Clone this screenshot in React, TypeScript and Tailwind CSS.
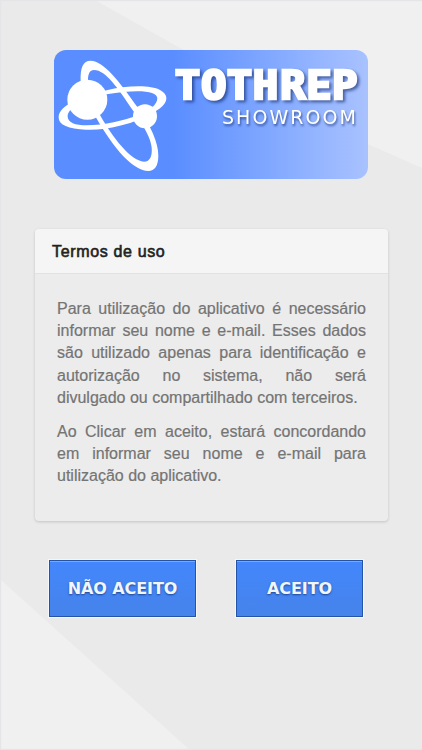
import React from 'react';

interface ActionButtonProps {
  label: string;
  className?: string;
}

// "divulgado" stays glued to the next word so that the line breaks before it
const terms: string[] = [
  'Para utilização do aplicativo é necessário informar seu nome e e-mail. Esses dados são utilizado apenas para identificação e autorização no sistema, não será divulgado\u00a0ou compartilhado com terceiros.',
  'Ao Clicar em aceito, estará concordando em informar seu nome e e-mail para utilização do aplicativo.',
];

const Background: React.FC = () => (
  <svg className="absolute inset-0" width="422" height="750" viewBox="0 0 422 750">
    <path d="M95 0L180 48L370 145L422 168V0Z" fill="#f0f0f0" />
    <path d="M0 579L190 750H0Z" fill="#f0f0f0" />
    <path d="M0 .5H422M.5 0V750M0 749.5H422" stroke="#e5e5e8" strokeWidth="1.5" />
  </svg>
);

const Logo: React.FC = () => (
  <div className="h-[129px] w-[314px] overflow-hidden rounded-[12px] bg-linear-to-r from-[#5a8dff] from-38% to-[#a9c2ff]">
    <svg width="314" height="129" viewBox="0 0 314 129" fill="#fff">
      <g transform="scale(.33333) translate(-12 -15)" fillRule="evenodd">
        <path d="M26 218C26 190 65 160 170 136C225 122 300 118 330 135C364 154 350 181 310 203C250 238 165 257 108 254C55 252 26 239 26 218ZM53 215C54 232 75 241 110 241C165 240 220 226 260 212C300 198 322 178 322 160C321 138 265 132 170 148C90 165 52 192 53 215Z" />
        <path d="M92 112C90 68 99 47 122 47C162 49 205 105 265 190C303 244 325 293 325 332C325 362 314 378 295 378C251 377 193 315 135 212C108 167 93 140 92 112ZM114 105C115 138 127 170 150 210C187 276 242 348 282 350C301 350 307 331 305 308C302 282 288 253 250 198C205 132 168 75 132 75C119 75 114 87 114 105Z" />
        <circle cx="112" cy="164" r="60" />
        <circle cx="285" cy="214" r="36" />
      </g>
      <text
        className="[filter:drop-shadow(2px_2px_1.5px_rgba(20,45,110,0.65))]"
        transform="scale(1.1 1)"
        x="121.3 145.3 168.6 192.4 217.2 241 264.4"
        y="48.7"
        textAnchor="middle"
        fontFamily="DejaVu Sans Mono, monospace"
        fontWeight="700"
        fontSize="38.5"
        stroke="#fff"
        strokeWidth="2.6"
      >
        TOTHREP
      </text>
      <text
        className="[filter:drop-shadow(1px_2px_1px_rgba(20,45,110,0.65))]"
        x="168"
        y="74"
        fontFamily="DejaVu Sans, sans-serif"
        fontSize="19"
        textLength="134"
      >
        SHOWROOM
      </text>
    </svg>
  </div>
);

const ActionButton: React.FC<ActionButtonProps> = ({ label, className }) => (
  <button
    className={`h-[57px] border border-[#2354a8] bg-linear-to-b from-[#4387fd] to-[#4683ea] font-['DejaVu_Sans',sans-serif] text-[16px] font-bold tracking-[-0.1px] text-[#f0f6ff] shadow-[0_0_0_1px_#f7f7f7,inset_0_1px_0_#78a9ff] [text-shadow:0_1px_2px_#1c4690] ${className}`}
  >
    {label}
  </button>
);

const App: React.FC = () => {
  return (
    <div className="relative h-[750px] w-[422px] overflow-hidden bg-[#eaeaea]">
      <Background />
      <main className="relative flex flex-col pt-[50px]">
        <div className="pl-[54px]">
          <Logo />
        </div>

        <section className="mt-[50px] ml-[35px] h-[292px] w-[353px] rounded-[4px] bg-[#ececec] font-['Liberation_Sans',sans-serif] shadow-[0_1px_3px_rgba(0,0,0,0.17)]">
          <h1 className="h-[45px] rounded-t-[4px] border-b border-[#e2e2e2] bg-[#f5f5f5] pl-[17px] text-[16px] leading-[45px] tracking-[0.65px] text-[#222] [-webkit-text-stroke:0.6px_#222]">
            Termos de uso
          </h1>
          <div className="flex flex-col gap-3 pt-[24px] pr-[22px] pl-[22px] text-justify text-[16px] leading-[22.2px] text-[#747474] [-webkit-text-stroke:0.2px_#747474]">
            {terms.map((term) => (
              <p key={term}>{term}</p>
            ))}
          </div>
        </section>

        <div className="mt-[39px] flex gap-10 pl-[49px]">
          <ActionButton label="NÃO ACEITO" className="w-[147px]" />
          <ActionButton label="ACEITO" className="w-[127px]" />
        </div>
      </main>
    </div>
  );
};

export default App;
